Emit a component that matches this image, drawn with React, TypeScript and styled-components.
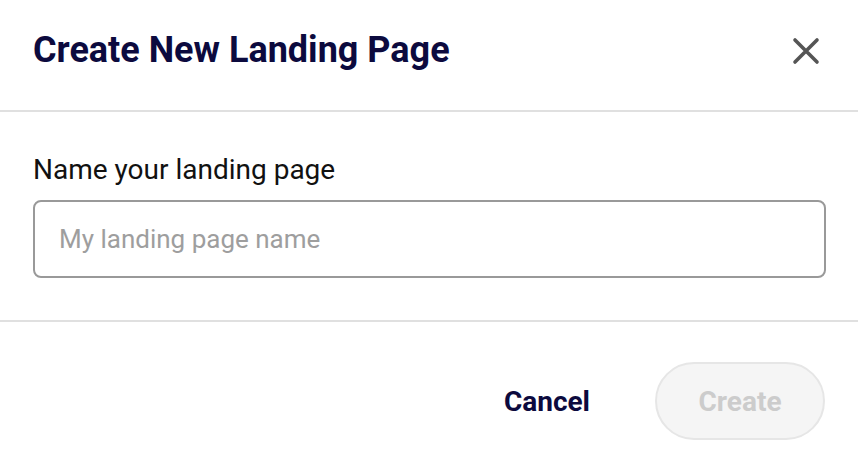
import React from 'react';
import styled, { createGlobalStyle } from 'styled-components';

const GlobalStyle = createGlobalStyle`
  body {
    margin: 0;
    background: #ffffff;
    font-family: Roboto, "Liberation Sans", sans-serif;
  }
`;

const Dialog = styled.div`
  width: 858px;
  display: flex;
  flex-direction: column;
`;

const Header = styled.div`
  height: 112px;
  padding: 0 38px 10px 33px;
  box-sizing: border-box;
  display: flex;
  align-items: center;
  justify-content: space-between;
  border-bottom: 2px solid #e0e0e0;
`;

const Title = styled.h1`
  margin: 0;
  font-size: 36px;
  font-weight: 700;
  color: #0c0a3e;
`;

const CloseButton = styled.button`
  border: none;
  background: none;
  padding: 0;
  margin-top: 2px;
  width: 28px;
  height: 28px;
  display: flex;
  align-items: center;
  justify-content: center;
  cursor: pointer;
`;

const Body = styled.div`
  padding: 41px 32px 42px 33px;
  display: flex;
  flex-direction: column;
  gap: 14px;
  border-bottom: 2px solid #e0e0e0;
`;

const Label = styled.label`
  font-size: 28px;
  color: #111111;
`;

const TextInput = styled.input`
  height: 78px;
  box-sizing: border-box;
  border: 2px solid #999999;
  border-radius: 8px;
  padding: 0 24px;
  font-family: inherit;
  font-size: 26px;
  color: #111;
  outline: none;

  &::placeholder {
    color: #9e9e9e;
  }
`;

const Footer = styled.div`
  display: flex;
  justify-content: flex-end;
  align-items: center;
  gap: 65px;
  padding: 40px 33px 0 0;
`;

const TextButton = styled.button`
  border: none;
  background: none;
  padding: 0;
  font-family: inherit;
  font-size: 28px;
  font-weight: 700;
  color: #0c0a3e;
  cursor: pointer;
`;

const PillButton = styled.button<{ disabled?: boolean }>`
  width: 170px;
  height: 78px;
  border-radius: 39px;
  border: 2px solid #e6e6e6;
  background: ${(p) => (p.disabled ? '#f5f5f5' : '#0c0a3e')};
  color: ${(p) => (p.disabled ? '#cccccc' : '#ffffff')};
  font-family: inherit;
  font-size: 28px;
  font-weight: 700;
`;

export default function App() {
  return (
    <>
      <GlobalStyle />
      <Dialog>
        <Header>
          <Title>Create New Landing Page</Title>
          <CloseButton aria-label="Close">
            <svg width="28" height="28" viewBox="0 0 28 28">
              <path
                d="M3 3 L25 25 M25 3 L3 25"
                stroke="#555555"
                strokeWidth="3.6"
                strokeLinecap="round"
              />
            </svg>
          </CloseButton>
        </Header>
        <Body>
          <Label htmlFor="lp-name">Name your landing page</Label>
          <TextInput id="lp-name" placeholder="My landing page name" />
        </Body>
        <Footer>
          <TextButton>Cancel</TextButton>
          <PillButton disabled>Create</PillButton>
        </Footer>
      </Dialog>
    </>
  );
}
